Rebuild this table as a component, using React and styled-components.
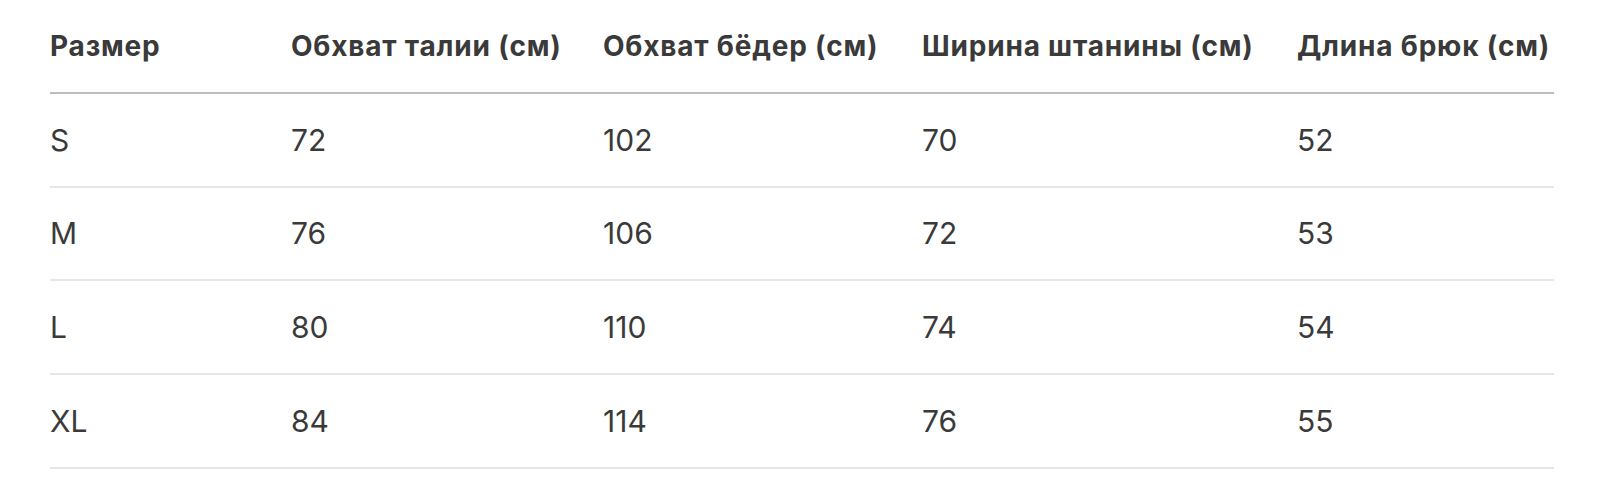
import React from "react";
import styled, { createGlobalStyle } from "styled-components";

const Global = createGlobalStyle`
  html, body { margin: 0; padding: 0; background: #ffffff; }
  body { font-family: Inter, "Noto Sans", sans-serif; color: #3a3a3a; }
`;

const Wrap = styled.div`
  padding: 0 58px 0 50px;
`;

const Table = styled.table`
  width: 1504px;
  table-layout: fixed;
  border-collapse: separate;
  border-spacing: 0;
`;

const Col = styled.col`
  width: ${(p) => p.$w}px;
`;

const Th = styled.th`
  box-sizing: border-box;
  height: 94px;
  padding: 0;
  text-align: left;
  vertical-align: middle;
  font-size: 28px;
  font-weight: 700;
  letter-spacing: 0.8px;
  color: #3a3a3a;
  white-space: nowrap;
  border-bottom: 2px solid #bdbdbd;
`;

const Td = styled.td`
  box-sizing: border-box;
  height: 93.67px;
  padding: 0;
  text-align: left;
  vertical-align: middle;
  font-size: 30px;
  font-weight: 400;
  color: #3a3a3a;
  border-bottom: 2px solid #e6e6e6;
`;

const cols = [241, 312, 319, 375, 257];
const headers = [
  "Размер",
  "Обхват талии (см)",
  "Обхват бёдер (см)",
  "Ширина штанины (см)",
  "Длина брюк (см)",
];
const rows = [
  ["S", "72", "102", "70", "52"],
  ["M", "76", "106", "72", "53"],
  ["L", "80", "110", "74", "54"],
  ["XL", "84", "114", "76", "55"],
];

export default function App() {
  return (
    <>
      <Global />
      <Wrap>
        <Table>
          <colgroup>
            {cols.map((w, i) => (
              <Col key={i} $w={w} />
            ))}
          </colgroup>
          <thead>
            <tr>
              {headers.map((h) => (
                <Th key={h}>{h}</Th>
              ))}
            </tr>
          </thead>
          <tbody>
            {rows.map((r) => (
              <tr key={r[0]}>
                {r.map((c, i) => (
                  <Td key={i}>{c}</Td>
                ))}
              </tr>
            ))}
          </tbody>
        </Table>
      </Wrap>
    </>
  );
}
